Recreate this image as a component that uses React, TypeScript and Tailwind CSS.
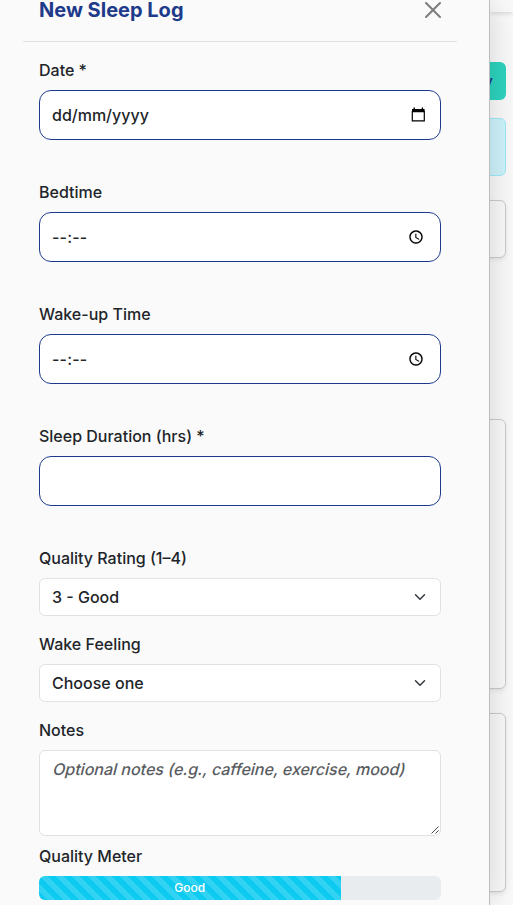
import type { ReactNode } from "react";

function Field({ label, children }: { label: string; children?: ReactNode }) {
  return (
    <div className="flex flex-col gap-2">
      <span>{label}</span>
      <div className="flex h-[50px] items-center justify-between rounded-xl border border-[#1e3a8a] bg-white px-3">
        {children}
      </div>
    </div>
  );
}

function TimeValue() {
  return (
    <>
      <span className="tracking-[0.2px]">--:--</span>
      <svg className="mr-1" width="16" height="16" viewBox="0 0 24 24" fill="#000" stroke="#000" strokeWidth="0.15">
        <path d="M11.99 2C6.47 2 2 6.48 2 12s4.47 10 9.99 10C17.52 22 22 17.52 22 12S17.52 2 11.99 2zM12 20c-4.42 0-8-3.58-8-8s3.58-8 8-8 8 3.58 8 8-3.58 8-8 8zm.5-13H11v6l5.25 3.15.75-1.23-4.5-2.67V7z" />
      </svg>
    </>
  );
}

function Select({ label, value }: { label: string; value: string }) {
  return (
    <div className="flex flex-col gap-2">
      <span>{label}</span>
      <div className="flex h-[38px] items-center justify-between rounded-md border border-[#dee2e6] bg-white px-3">
        <span>{value}</span>
        <svg width="16" height="12" viewBox="0 0 16 16" fill="none" stroke="#343a40" strokeWidth="2" strokeLinecap="round" strokeLinejoin="round">
          <path d="m2 5 6 6 6-6" />
        </svg>
      </div>
    </div>
  );
}

export default function App() {
  return (
    <div className="flex h-[905px] w-[513px] overflow-hidden bg-[#fafafa] font-['Inter',sans-serif] text-base leading-6 font-medium text-[#212529]">
      <main className="relative z-10 w-[490px] shrink-0 border-r border-[#bdbdbd] bg-[#fafafa] pl-[23px] shadow-[0_0_32px_rgba(0,0,0,0.16)]">
        <header className="flex h-[42px] w-[434px] justify-between border-b border-[#dee2e6] px-4">
          <h1 className="text-xl leading-5 font-bold text-[#1e3a8a]">New Sleep Log</h1>
          <svg className="mt-[2px]" width="16" height="16" viewBox="0 0 16 16" fill="#7d7d7d">
            <path d="M.293.293a1 1 0 0 1 1.414 0L8 6.586 14.293.293a1 1 0 1 1 1.414 1.414L9.414 8l6.293 6.293a1 1 0 0 1-1.414 1.414L8 9.414l-6.293 6.293a1 1 0 0 1-1.414-1.414L6.586 8 .293 1.707a1 1 0 0 1 0-1.414" />
          </svg>
        </header>
        <section className="ml-4 w-[402px] pt-4">
          <div className="flex flex-col gap-10">
            <Field label="Date *">
              <span>dd/mm/yyyy</span>
              <svg className="mr-px" width="16" height="16" viewBox="0 0 16 16">
                <path d="M2.500 .5h1.400v2h-1.400zM10.700 .5h1.400v2h-1.400zM1 2h12.600v3.200H1z" />
                <path d="M1.300 4v9.900h12V4" fill="none" stroke="#000" strokeWidth="1.200" />
              </svg>
            </Field>
            <Field label="Bedtime"><TimeValue /></Field>
            <Field label="Wake-up Time"><TimeValue /></Field>
            <Field label="Sleep Duration (hrs) *" />
            <div className="flex flex-col gap-4">
              <Select label="Quality Rating (1–4)" value="3 - Good" />
              <Select label="Wake Feeling" value="Choose one" />
              <div className="flex flex-col gap-2">
                <span>Notes</span>
                <div className="relative flex h-[86px] w-full rounded-md border border-[#dee2e6] bg-white px-3 py-1.5 text-[#595c5f]">
                  <span className="h-6 origin-[0_75%] -skew-x-[14deg] whitespace-nowrap">
                    Optional notes (e.g., caffeine, exercise, mood)
                  </span>
                  <svg className="absolute right-px bottom-px" width="8" height="8" viewBox="0 0 8 8" fill="none" stroke="#4a4a4a">
                    <path d="M.5 7.500l7-7M4.500 7.500l3-3" />
                  </svg>
                </div>
                <span>Quality Meter</span>
                <div className="h-6 overflow-hidden rounded-md bg-[#e9ecef]">
                  <div className="flex h-full w-3/4 items-center justify-center bg-[#0dcaf0] bg-[linear-gradient(45deg,rgba(255,255,255,.15)_25%,transparent_25%,transparent_50%,rgba(255,255,255,.15)_50%,rgba(255,255,255,.15)_75%,transparent_75%,transparent)] bg-size-[16px_16px] text-xs text-white">
                    Good
                  </div>
                </div>
              </div>
            </div>
          </div>
        </section>
      </main>
      <aside className="w-[23px] shrink-0">
        <div className="h-3 bg-[#fafafa] shadow-[0_2px_4px_rgba(0,0,0,0.12)]" />
        <div className="-ml-8 w-12">
          <div className="mt-[50px] flex h-[38px] items-center justify-end rounded-md bg-[#2dd4bf] pr-[13px] text-[#1e3a8a]">y</div>
          <div className="mt-[18px] h-[58px] rounded-md border border-[#9eeaf9] bg-[#cff4fc]" />
          <div className="mt-6 h-[58px] rounded-md border border-[#cccccc] bg-[#fafafa] shadow-[0_2px_4px_rgba(0,0,0,0.075)]" />
          <div className="mt-[161px] h-[270px] rounded-md border border-[#cccccc] bg-[#fafafa] shadow-[0_2px_4px_rgba(0,0,0,0.075)]" />
          <div className="mt-6 h-[179px] rounded-md border border-[#cccccc] bg-[#fafafa] shadow-[0_2px_4px_rgba(0,0,0,0.075)]" />
        </div>
      </aside>
    </div>
  );
}
